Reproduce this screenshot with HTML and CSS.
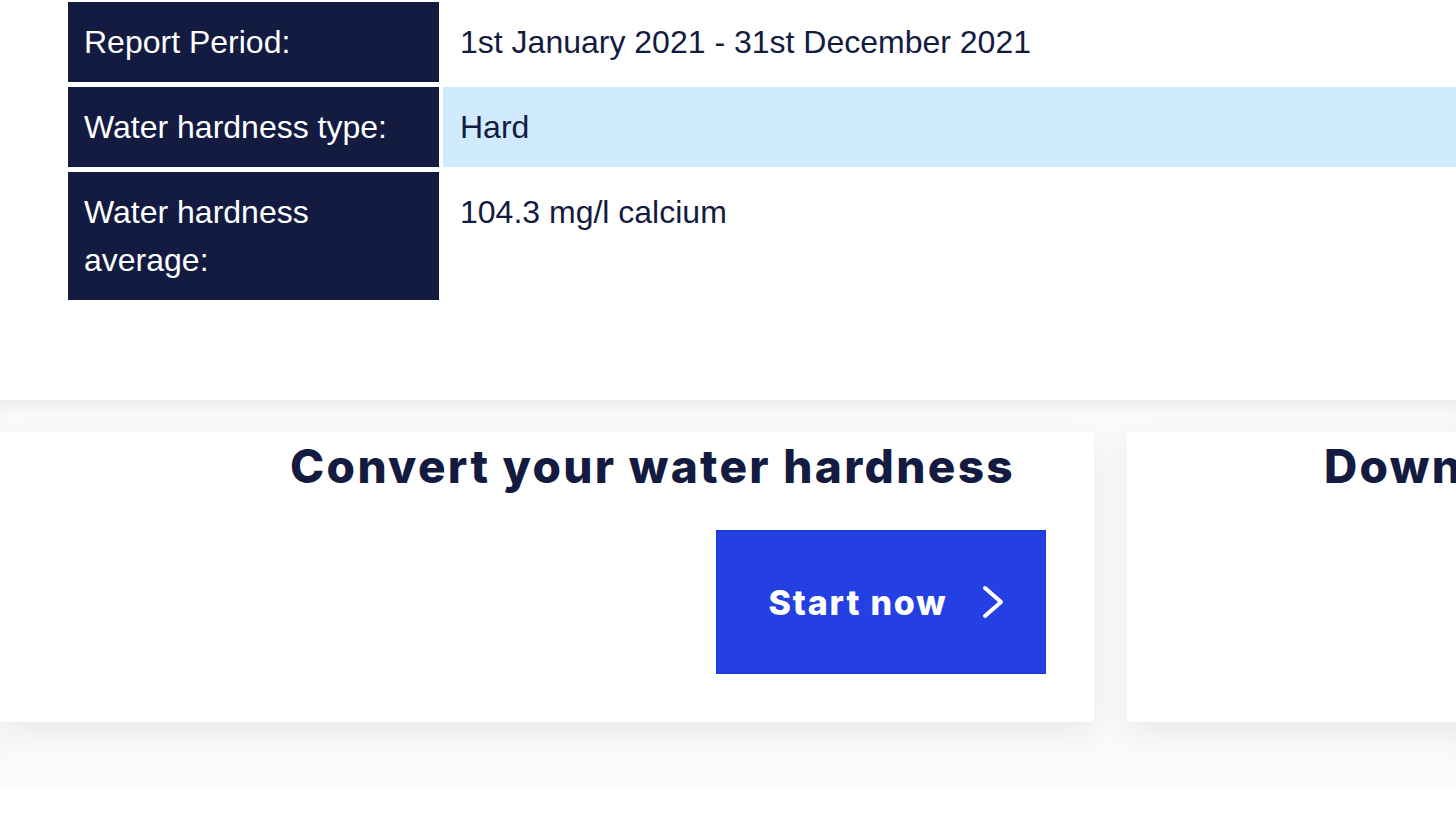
FILE: index.html
```html
<!DOCTYPE html>
<html lang="en">
<head>
<meta charset="utf-8">
<title>Water hardness</title>
<link rel="stylesheet" href="styles.css">
</head>
<body>
<main class="page">
  <section class="report">
    <div class="report-grid">
      <div class="label">Report Period:</div>
      <div class="value">1st January 2021 - 31st December 2021</div>
      <div class="label">Water hardness type:</div>
      <div class="value value-highlight">Hard</div>
      <div class="label">Water hardness average:</div>
      <div class="value">104.3 mg/l calcium</div>
    </div>
  </section>
  <section class="cards">
    <div class="card">
      <h2 class="card-title card-title-convert">Convert your water hardness</h2>
      <a class="btn" href="#">
        <span>Start now</span>
        <svg class="chev" width="26" height="34" viewBox="0 0 26 34" aria-hidden="true">
          <polyline points="4,3 20,17 4,31" fill="none" stroke="#fff" stroke-width="4" stroke-linecap="round" stroke-linejoin="round"/>
        </svg>
      </a>
    </div>
    <div class="card">
      <h2 class="card-title card-title-download">Download your report</h2>
    </div>
  </section>
</main>
</body>
</html>
```
FILE: styles.css
```css
html, body {
  margin: 0;
  padding: 0;
  background: #fff;
  overflow: hidden;
}
.page {
  width: 1456px;
  height: 819px;
  overflow: hidden;
}
.report {
  padding: 2px 0 0 68px;
  height: 400px;
  box-sizing: border-box;
}
.report-grid {
  display: grid;
  grid-template-columns: 371px 1100px;
  column-gap: 4px;
  row-gap: 5px;
  font-family: "Liberation Sans", Arial, sans-serif;
  font-size: 32px;
  line-height: 48px;
}
.label {
  background: #131b41;
  color: #fff;
  padding: 16px 16px;
}
.value {
  color: #131b41;
  padding: 16px 17px;
}
.value-highlight {
  background: #cfebfd;
}
.cards {
  display: grid;
  grid-template-columns: 1094px 1094px;
  column-gap: 33px;
  padding: 32px 0 65px 0;
  background: #fafafa;
  box-shadow: inset 0 12px 16px -8px rgba(0,0,0,0.07);
}
.card {
  background: #fff;
  height: 290px;
  box-shadow: 0 10px 30px rgba(0,0,0,0.07);
  display: flex;
  flex-direction: column;
  align-items: flex-end;
  padding: 0 48px 0 0;
  box-sizing: border-box;
}
.card + .card {
  align-items: flex-start;
  padding: 0 0 0 197px;
}
.card-title {
  margin: 0;
  font-family: Inter, "Open Sans", sans-serif;
  font-weight: 800;
  font-size: 46px;
  line-height: 66px;
  letter-spacing: 2.3px;
  color: #131b41;
  padding-top: 1px;
  white-space: nowrap;
}
.card-title-convert {
  margin-right: 31px;
}
.btn {
  margin-top: 31px;
  width: 330px;
  height: 144px;
  box-sizing: border-box;
  background: #2440e3;
  border: 1px solid #1d36d6;
  display: flex;
  align-items: center;
  justify-content: center;
  gap: 34px;
  color: #fff;
  text-decoration: none;
  font-family: Inter, "Open Sans", sans-serif;
  font-weight: 800;
  font-size: 34px;
  letter-spacing: 1.8px;
  padding-left: 14px;
}
.chev {
  display: block;
}
```
